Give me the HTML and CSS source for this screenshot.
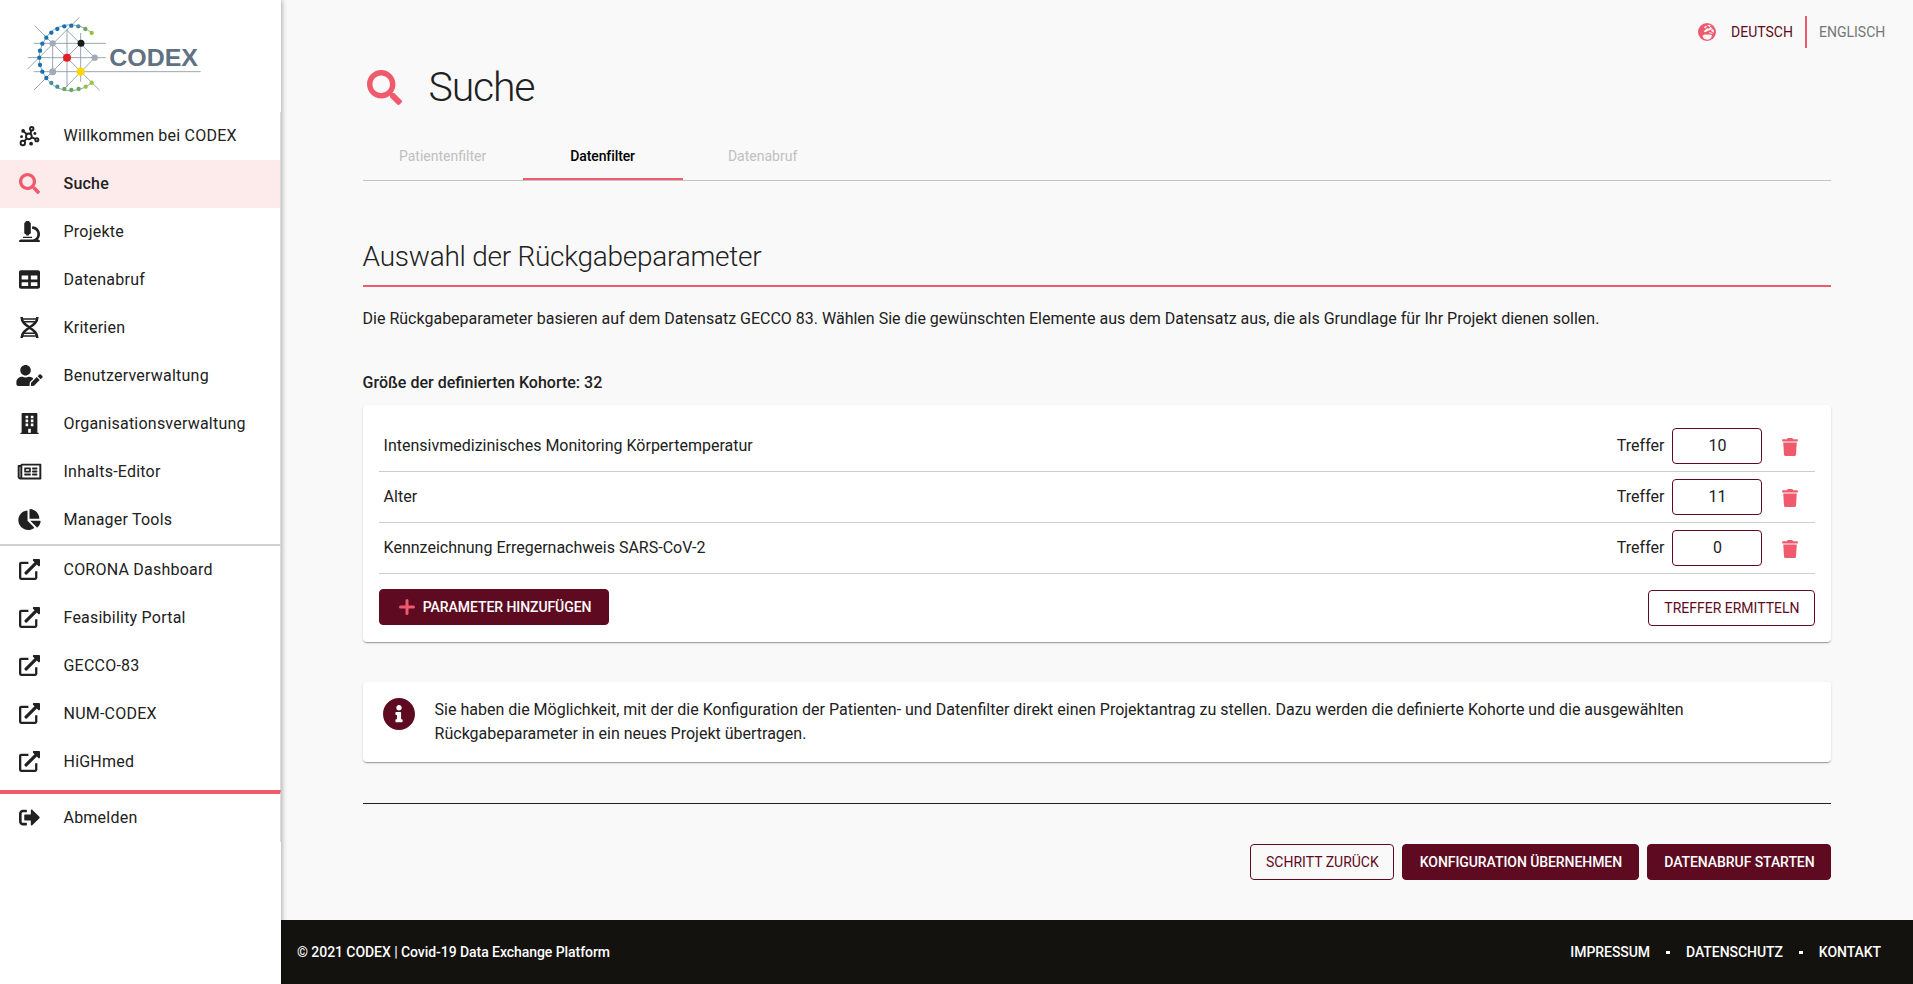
FILE: index.html
```html
<!DOCTYPE html>
<html lang="de">
<head>
<meta charset="utf-8">
<title>CODEX – Suche</title>
<link rel="stylesheet" href="styles.css">
</head>
<body>
<svg class="defs" aria-hidden="true">
  <symbol id="i-molecule" viewBox="56 372 66 68">
    <g fill="none" stroke="currentColor" stroke-width="6">
      <circle cx="87" cy="407" r="9"/><circle cx="96" cy="383" r="5.5"/><circle cx="112" cy="418" r="5"/><circle cx="68" cy="428" r="7"/>
      <path d="M92 399l3-10M72 393l8 7M96 410l11 5M80 414l-7 8"/>
    </g>
    <g fill="currentColor"><circle cx="69" cy="390" r="6"/><circle cx="64" cy="408" r="4.5"/><circle cx="106" cy="398" r="4.5"/><circle cx="94" cy="430" r="6"/></g>
  </symbol>
  <symbol id="i-search" viewBox="0 0 512 512"><path fill="currentColor" d="M505 442.7L405.3 343c-4.5-4.5-10.6-7-17-7H372c27.6-35.3 44-79.7 44-128C416 93.1 322.9 0 208 0S0 93.1 0 208s93.1 208 208 208c48.3 0 92.7-16.4 128-44v16.3c0 6.4 2.5 12.5 7 17l99.7 99.7c9.4 9.4 24.6 9.4 33.9 0l28.3-28.3c9.4-9.4 9.4-24.6.1-34zM208 336c-70.7 0-128-57.2-128-128 0-70.7 57.2-128 128-128 70.7 0 128 57.2 128 128 0 70.7-57.2 128-128 128z"/></symbol>
  <symbol id="i-microscope" viewBox="0 0 512 512"><path fill="currentColor" d="M160 320h12v16c0 8.84 7.16 16 16 16h40c8.84 0 16-7.16 16-16v-16h12c17.67 0 32-14.33 32-32V64c0-17.67-14.33-32-32-32V16c0-8.84-7.16-16-16-16h-64c-8.84 0-16 7.16-16 16v16c-17.67 0-32 14.33-32 32v224c0 17.67 14.33 32 32 32zm304 128h-1.29C493.24 413.99 512 369.2 512 320c0-105.88-86.12-192-192-192v64c70.58 0 128 57.42 128 128s-57.42 128-128 128H48c-26.51 0-48 21.49-48 48 0 8.84 7.16 16 16 16h480c8.84 0 16-7.16 16-16 0-26.51-21.49-48-48-48zm-360-32h208c4.42 0 8-3.58 8-8v-16c0-4.42-3.58-8-8-8H104c-4.42 0-8 3.58-8 8v16c0 4.42 3.58 8 8 8z"/></symbol>
  <symbol id="i-table" viewBox="0 0 512 512"><path fill="currentColor" d="M464 32H48C21.49 32 0 53.49 0 80v352c0 26.51 21.49 48 48 48h416c26.51 0 48-21.49 48-48V80c0-26.51-21.49-48-48-48zM224 416H64v-96h160v96zm0-160H64v-96h160v96zm224 160H288v-96h160v96zm0-160H288v-96h160v96z"/></symbol>
  <symbol id="i-dna" viewBox="0 0 448 512">
    <g fill="none" stroke="currentColor"><path stroke-width="62" d="M32 0C32 130 130 190 224 256S416 382 416 512M416 0C416 130 318 190 224 256S32 382 32 512"/><path stroke-width="36" d="M50 50H398M80 118H368M80 394H368M50 462H398"/></g>
  </symbol>
  <symbol id="i-user-edit" viewBox="0 0 640 512"><path fill="currentColor" d="M224 256c70.7 0 128-57.3 128-128S294.7 0 224 0 96 57.3 96 128s57.3 128 128 128zm89.6 32h-16.7c-22.2 10.2-46.9 16-72.9 16s-50.6-5.8-72.9-16h-16.7C60.2 288 0 348.2 0 422.4V464c0 26.5 21.5 48 48 48h274.9c-2.4-6.8-3.4-14-2.6-21.3l6.8-60.9 1.2-11.1 7.9-7.9 77.3-77.3c-24.5-27.7-60-45.5-99.9-45.5zm45.3 145.3l-6.8 61c-1.1 10.2 7.5 18.8 17.6 17.6l60.9-6.8 137.9-137.9-71.7-71.7-137.9 137.8zM633 268.9L595.1 231c-9.3-9.3-24.5-9.3-33.8 0l-37.8 37.8-4.1 4.1 71.8 71.7 41.8-41.8c9.3-9.4 9.3-24.5 0-33.9z"/></symbol>
  <symbol id="i-building" viewBox="0 0 448 512"><path fill="currentColor" fill-rule="evenodd" d="M436 480h-20V24c0-13.255-10.745-24-24-24H56C42.745 0 32 10.745 32 24v456H12c-6.627 0-12 5.373-12 12v20h448v-20c0-6.627-5.373-12-12-12zM128 64h64v64h-64zM256 64h64v64h-64zM128 160h64v64h-64zM256 160h64v64h-64zM128 256h64v64h-64zM256 256h64v64h-64zM192 384h64v96h-64z"/></symbol>
  <symbol id="i-newspaper" viewBox="0 0 576 512"><path fill="currentColor" d="M552 64H112c-20.858 0-38.643 13.377-45.248 32H24c-13.255 0-24 10.745-24 24v272c0 30.928 25.072 56 56 56h496c13.255 0 24-10.745 24-24V88c0-13.255-10.745-24-24-24zM48 392V144h16v248c0 4.411-3.589 8-8 8s-8-3.589-8-8zm480 8H111.422c.374-2.614.578-5.283.578-8V112h416v288zM172 280h136c6.627 0 12-5.373 12-12v-96c0-6.627-5.373-12-12-12H172c-6.627 0-12 5.373-12 12v96c0 6.627 5.373 12 12 12zm28-80h80v40h-80v-40zm-40 140v-24c0-6.627 5.373-12 12-12h136c6.627 0 12 5.373 12 12v24c0 6.627-5.373 12-12 12H172c-6.627 0-12-5.373-12-12zm192 0v-24c0-6.627 5.373-12 12-12h104c6.627 0 12 5.373 12 12v24c0 6.627-5.373 12-12 12H364c-6.627 0-12-5.373-12-12zm0-144v-24c0-6.627 5.373-12 12-12h104c6.627 0 12 5.373 12 12v24c0 6.627-5.373 12-12 12H364c-6.627 0-12-5.373-12-12zm0 72v-24c0-6.627 5.373-12 12-12h104c6.627 0 12 5.373 12 12v24c0 6.627-5.373 12-12 12H364c-6.627 0-12-5.373-12-12z"/></symbol>
  <symbol id="i-pie" viewBox="0 0 544 512"><path fill="currentColor" d="M527.79 288H290.5l158.03 158.03c6.04 6.04 15.98 6.53 22.19.68 38.7-36.46 65.32-85.61 73.13-140.86 1.34-9.46-6.51-17.85-16.06-17.85zm-15.83-64.8C503.72 103.74 408.26 8.28 288.8.04 279.68-.59 272 7.1 272 16.24V240h223.77c9.14 0 16.82-7.68 16.19-16.8zM224 288V50.71c0-9.55-8.39-17.4-17.84-16.06C86.99 51.49-4.1 155.6.14 280.37 4.5 408.51 114.83 513.59 243.03 511.98c50.4-.63 96.97-16.87 135.26-44.03 7.9-5.6 8.42-17.23 1.57-24.08L224 288z"/></symbol>
  <symbol id="i-external" viewBox="0 0 512 512">
    <path fill="none" stroke="currentColor" stroke-width="56" stroke-linejoin="round" d="M230 92H52a24 24 0 0 0-24 24v344a24 24 0 0 0 24 24h344a24 24 0 0 0 24-24V300"/>
    <path fill="currentColor" d="M512 24v128c0 21-26 32-41 17l-36-36-243 243c-9 9-25 9-34 0l-22-22c-9-9-9-25 0-34l243-243-36-36c-15-15-4-41 17-41h128c13 0 24 11 24 24z"/>
  </symbol>
  <symbol id="i-signout" viewBox="0 0 512 512"><path fill="currentColor" d="M497 273L329 441c-15 15-41 4.5-41-17v-96H152c-13.3 0-24-10.7-24-24v-96c0-13.3 10.7-24 24-24h136V88c0-21.4 25.9-32 41-17l168 168c9.3 9.4 9.3 24.6 0 34zM192 436v-40c0-6.6-5.4-12-12-12H96c-17.7 0-32-14.3-32-32V160c0-17.7 14.3-32 32-32h84c6.6 0 12-5.4 12-12V76c0-6.600-5.400-12-12-12H96c-53 0-96 43-96 96v192c0 53 43 96 96 96h84c6.6 0 12-5.4 12-12z"/></symbol>
  <symbol id="i-trash" viewBox="0 0 448 512"><path fill="currentColor" d="M432 32H312l-9.4-18.7A24 24 0 0 0 281.1 0H166.8a23.72 23.72 0 0 0-21.4 13.3L136 32H16A16 16 0 0 0 0 48v32a16 16 0 0 0 16 16h416a16 16 0 0 0 16-16V48a16 16 0 0 0-16-16zM53.2 467a48 48 0 0 0 47.9 45h245.8a48 48 0 0 0 47.9-45L416 128H32z"/></symbol>
  <symbol id="i-info" viewBox="8 8 496 496"><path fill="currentColor" d="M256 8C119.043 8 8 119.083 8 256c0 136.997 111.043 248 248 248s248-111.003 248-248C504 119.083 392.957 8 256 8zm0 110c23.196 0 42 18.804 42 42s-18.804 42-42 42-42-18.804-42-42 18.804-42 42-42zm56 254c0 6.627-5.373 12-12 12h-88c-6.627 0-12-5.373-12-12v-24c0-6.627 5.373-12 12-12h12v-64h-12c-6.627 0-12-5.373-12-12v-24c0-6.627 5.373-12 12-12h64c6.627 0 12 5.373 12 12v100h12c6.627 0 12 5.373 12 12v24z"/></symbol>
  <symbol id="i-plus" viewBox="0 0 16 16"><path fill="none" stroke="currentColor" stroke-width="3" stroke-linecap="round" d="M8 1.5v13M1.500 8h13"/></symbol>
  <symbol id="i-globe" viewBox="0 0 54 54">
    <circle cx="27" cy="27" r="27" fill="currentColor"/>
    <path fill="#f9f9f9" d="M17 14l6-6 4 2-5 6zM28 7l6-2 5 3-5 4zM21 21l6-5 6 1 4-5 6 4-6 5-7 2-8 5-5-2zM42 18l5 3 1 8-6-3-3-4zM14 40c0-5 7-6 14-5 6-1 13-1 14 3-1 7-7 12-15 12-6 0-13-4-13-10zM33 27l11 3-1 3-9-3z"/>
  </symbol>
</svg>

<div class="app">
  <aside class="sidebar">
    <div class="logo">
      <svg width="220" height="112" viewBox="0 0 660 336" role="img" aria-label="CODEX">
        <g stroke="#8295a3" stroke-width="2.500" fill="none">
          <path d="M101 130H318M83 173H317M101 215H602M158 130V215M201 88V262M242 99V245M104 77L299 271M238 52L83 207M102 270L242 130M200 90L284 173L195 264"/>
          <path stroke="#5b9ab8" d="M275 99C230 60 165 70 139 113C110 155 112 195 139 234C170 280 235 283 275 248"/>
        </g>
        <g fill="#1d6fae"><circle cx="214" cy="77" r="6.500"/><circle cx="193" cy="79" r="6.500"/><circle cx="172" cy="87" r="6.500"/><circle cx="154" cy="98" r="6.500"/><circle cx="139" cy="113" r="6.500"/><circle cx="127" cy="131" r="6.500"/><circle cx="120" cy="152" r="6.500"/><circle cx="118" cy="173" r="6.500"/><circle cx="120" cy="195" r="6.500"/><circle cx="127" cy="215" r="6.500"/><circle cx="139" cy="234" r="6.500"/></g>
        <g fill="#4a8e99"><circle cx="235" cy="79" r="6.500"/><circle cx="154" cy="249" r="6.500"/><circle cx="172" cy="260" r="6.500"/></g>
        <g fill="#6ba65a"><circle cx="256" cy="87" r="6.500"/><circle cx="193" cy="267" r="6.500"/><circle cx="214" cy="270" r="6.500"/><circle cx="236" cy="267" r="6.500"/></g>
        <g fill="#96c33c"><circle cx="275" cy="99" r="6.500"/><circle cx="257" cy="260" r="6.500"/><circle cx="275" cy="248" r="6.500"/></g>
        <g fill="#a0acb8"><circle cx="158" cy="130" r="9.500"/><circle cx="158" cy="215" r="10.500"/><circle cx="284" cy="173" r="9.500"/></g>
        <circle cx="243" cy="130" r="10.500" fill="#1b1b1b"/><circle cx="201" cy="173" r="12" fill="#e51d26"/><circle cx="242" cy="215" r="12.500" fill="#ffd500"/>
        <text class="logo-text" x="328" y="197" textLength="266" lengthAdjust="spacingAndGlyphs">CODEX</text>
      </svg>
    </div>
    <nav class="nav">
      <a class="nav-item"><span class="ico"><svg width="21" height="22"><use href="#i-molecule"/></svg></span>Willkommen bei CODEX</a>
      <a class="nav-item active"><span class="ico"><svg width="21" height="21"><use href="#i-search"/></svg></span>Suche</a>
      <a class="nav-item"><span class="ico"><svg width="21" height="21"><use href="#i-microscope"/></svg></span>Projekte</a>
      <a class="nav-item"><span class="ico"><svg width="21" height="21"><use href="#i-table"/></svg></span>Datenabruf</a>
      <a class="nav-item"><span class="ico"><svg width="19" height="21"><use href="#i-dna"/></svg></span>Kriterien</a>
      <a class="nav-item"><span class="ico"><svg width="27" height="21"><use href="#i-user-edit"/></svg></span>Benutzerverwaltung</a>
      <a class="nav-item"><span class="ico"><svg width="19" height="21"><use href="#i-building"/></svg></span>Organisationsverwaltung</a>
      <a class="nav-item"><span class="ico"><svg width="25" height="21"><use href="#i-newspaper"/></svg></span>Inhalts-Editor</a>
      <a class="nav-item"><span class="ico"><svg width="23" height="21"><use href="#i-pie"/></svg></span>Manager Tools</a>
    </nav>
    <nav class="nav external">
      <a class="nav-item"><span class="ico"><svg width="21" height="21"><use href="#i-external"/></svg></span>CORONA Dashboard</a>
      <a class="nav-item"><span class="ico"><svg width="21" height="21"><use href="#i-external"/></svg></span>Feasibility Portal</a>
      <a class="nav-item"><span class="ico"><svg width="21" height="21"><use href="#i-external"/></svg></span>GECCO-83</a>
      <a class="nav-item"><span class="ico"><svg width="21" height="21"><use href="#i-external"/></svg></span>NUM-CODEX</a>
      <a class="nav-item"><span class="ico"><svg width="21" height="21"><use href="#i-external"/></svg></span>HiGHmed</a>
    </nav>
    <nav class="nav session">
      <a class="nav-item"><span class="ico"><svg width="21" height="21"><use href="#i-signout"/></svg></span>Abmelden</a>
    </nav>
  </aside>

  <div class="page">
    <header class="lang">
      <svg class="globe" width="18" height="18"><use href="#i-globe"/></svg>
      <a class="lang-link current">DEUTSCH</a>
      <a class="lang-link other">ENGLISCH</a>
    </header>
    <main class="content">
      <div class="title">
        <svg width="35" height="35"><use href="#i-search"/></svg>
        <h1>Suche</h1>
      </div>
      <div class="tabs">
        <div class="tab">Patientenfilter</div>
        <div class="tab selected">Datenfilter</div>
        <div class="tab">Datenabruf</div>
      </div>
      <h2>Auswahl der Rückgabeparameter</h2>
      <p class="intro">Die Rückgabeparameter basieren auf dem Datensatz GECCO 83. Wählen Sie die gewünschten Elemente aus dem Datensatz aus, die als Grundlage für Ihr Projekt dienen sollen.</p>
      <p class="cohort">Größe der definierten Kohorte: 32</p>
      <section class="card params">
        <div class="row"><span class="name">Intensivmedizinisches Monitoring Körpertemperatur</span><span>Treffer</span><span class="hits">10</span><svg class="trash" width="16" height="18"><use href="#i-trash"/></svg></div>
        <div class="row"><span class="name">Alter</span><span>Treffer</span><span class="hits">11</span><svg class="trash" width="16" height="18"><use href="#i-trash"/></svg></div>
        <div class="row"><span class="name">Kennzeichnung Erregernachweis SARS-CoV-2</span><span>Treffer</span><span class="hits">0</span><svg class="trash" width="16" height="18"><use href="#i-trash"/></svg></div>
        <div class="card-actions">
          <a class="btn filled add"><svg width="16" height="16"><use href="#i-plus"/></svg>PARAMETER HINZUFÜGEN</a>
          <a class="btn outlined find">TREFFER ERMITTELN</a>
        </div>
      </section>
      <section class="card info">
        <svg width="32" height="32"><use href="#i-info"/></svg>
        <p>Sie haben die Möglichkeit, mit der die Konfiguration der Patienten- und Datenfilter direkt einen Projektantrag zu stellen. Dazu werden die definierte Kohorte und die ausgewählten<br>Rückgabeparameter in ein neues Projekt übertragen.</p>
      </section>
      <div class="actions">
        <a class="btn outlined back">SCHRITT ZURÜCK</a>
        <a class="btn filled apply">KONFIGURATION ÜBERNEHMEN</a>
        <a class="btn filled start">DATENABRUF STARTEN</a>
      </div>
    </main>
    <footer class="footer">
      <span>© 2021 CODEX | Covid-19 Data Exchange Platform</span>
      <div class="links"><a>IMPRESSUM</a><i class="dot"></i><a>DATENSCHUTZ</a><i class="dot"></i><a>KONTAKT</a></div>
    </footer>
  </div>
</div>
</body>
</html>
```
FILE: styles.css
```css
* { box-sizing: border-box; }
body {
  margin: 0;
  font: 400 16px/24px Roboto, "Liberation Sans", sans-serif;
  color: #212121;
  background: #f9f9f9;
}
h1, h2, p { margin: 0; }
svg { display: block; flex: none; }
.defs { display: none; }
.app { display: flex; height: 984px; overflow: hidden; }

.sidebar {
  position: relative;
  z-index: 1;
  flex: none;
  width: 281px;
  background: #fff;
  box-shadow: 1px 0 5px rgba(0, 0, 0, .32);
}
.logo { height: 112px; width: 280px; }
.logo-text { font: 700 74px "Liberation Sans", sans-serif; fill: #5f7282; }
.nav { border-right: 1px solid #dcdcdc; }
.nav-item { display: flex; align-items: center; height: 48px; letter-spacing: .22px; }
.nav-item.active { background: #fdebec; font-weight: 500; }
.nav-item.active .ico { color: #ef5b6c; }
.ico { display: flex; justify-content: center; width: 27px; margin: 0 20.500px 1px 16px; }
.external { border-top: 2px solid #d0d0d0; padding-bottom: 4px; }
.session { border-top: 4px solid #ef5b6c; }

.page { flex: 1; display: flex; flex-direction: column; min-width: 0; }
.lang {
  display: flex;
  align-items: center;
  justify-content: flex-end;
  height: 32px;
  margin: 16px 28px 0 0;
  font-size: 14px;
}
.globe { color: #ef5b6c; margin-right: 15px; }
.lang-link.current { color: #5e0b22; width: 61px; margin-right: 13px; }
.lang-link.other { color: #757575; line-height: 32px; border-left: 2px solid #ef5b6c; padding-left: 12px; width: 80px; }

.content { margin: 0 81.600px; flex: 1; }
.title { display: flex; align-items: center; height: 48px; margin-top: 15px; padding-left: 4px; color: #ef5b6c; }
h1 { margin-left: 27px; font-size: 41px; line-height: 50px; font-weight: 300; letter-spacing: -1.200px; color: #212121; }
.tabs { display: flex; height: 49px; margin-top: 21px; border-bottom: 1px solid #c4c4c4; }
.tab { width: 160px; text-align: center; font-size: 14px; line-height: 48px; color: #c0c0c0; }
.tab.selected { color: #000; font-weight: 500; letter-spacing: -.1px; border-bottom: 2px solid #ef5b6c; }
h2 { margin-top: 51px; height: 55px; border-bottom: 2px solid #ef5b6c; font-size: 28px; line-height: 49px; font-weight: 300; letter-spacing: -.25px; }
.intro { margin-top: 20px; }
.cohort { margin-top: 40px; font-weight: 500; }
.card {
  background: #fff;
  border-radius: 4px;
  box-shadow: 0 2px 1px -1px rgba(0, 0, 0, .2), 0 1px 1px rgba(0, 0, 0, .14), 0 1px 3px rgba(0, 0, 0, .12);
}
.params { margin-top: 10px; height: 237px; padding: 16px; }
.row { display: flex; align-items: center; height: 51px; padding: 0 17px 1px 5px; border-bottom: 1px solid #ccc; }
.name { flex: 1; }
.hits { width: 90px; height: 36px; margin-left: 8px; border: 1px solid #5e0b22; border-radius: 4px; line-height: 34px; text-align: center; }
.trash { color: #ef5b6c; margin: 2px 0 0 20px; }
.btn { display: flex; align-items: center; justify-content: center; height: 36px; border: 1px solid #5e0b22; border-radius: 4px; font-size: 14px; white-space: nowrap; }
.filled { background: #5e0b22; color: #fff; font-weight: 500; letter-spacing: -.07px; }
.outlined { color: #5e0b22; }
.card-actions { display: flex; justify-content: space-between; padding-top: 15px; }
.add { width: 230px; padding-left: 3px; }
.add svg { color: #ef5b6c; margin-right: 8px; }
.find { width: 167px; margin-top: 1px; }
.info { display: flex; align-items: flex-start; margin-top: 40px; height: 80px; padding: 16px 20px; color: #212121; }
.info svg { color: #5e0b22; }
.info p { margin: 0 0 0 20px; }
.actions { display: flex; justify-content: flex-end; gap: 8px; margin-top: 41px; padding-top: 40px; border-top: 1px solid #212121; }
.back { width: 144px; }
.apply { width: 237px; }
.start { width: 184px; }

.footer { display: flex; align-items: center; justify-content: space-between; height: 64px; padding: 0 32px 0 16px; background: #13120f; color: #fff; font-size: 14px; font-weight: 500; letter-spacing: -.06px; }
.links { display: flex; align-items: center; }
.dot { width: 4px; height: 3px; margin: 1px 16px 0; background: #fff; }
```
